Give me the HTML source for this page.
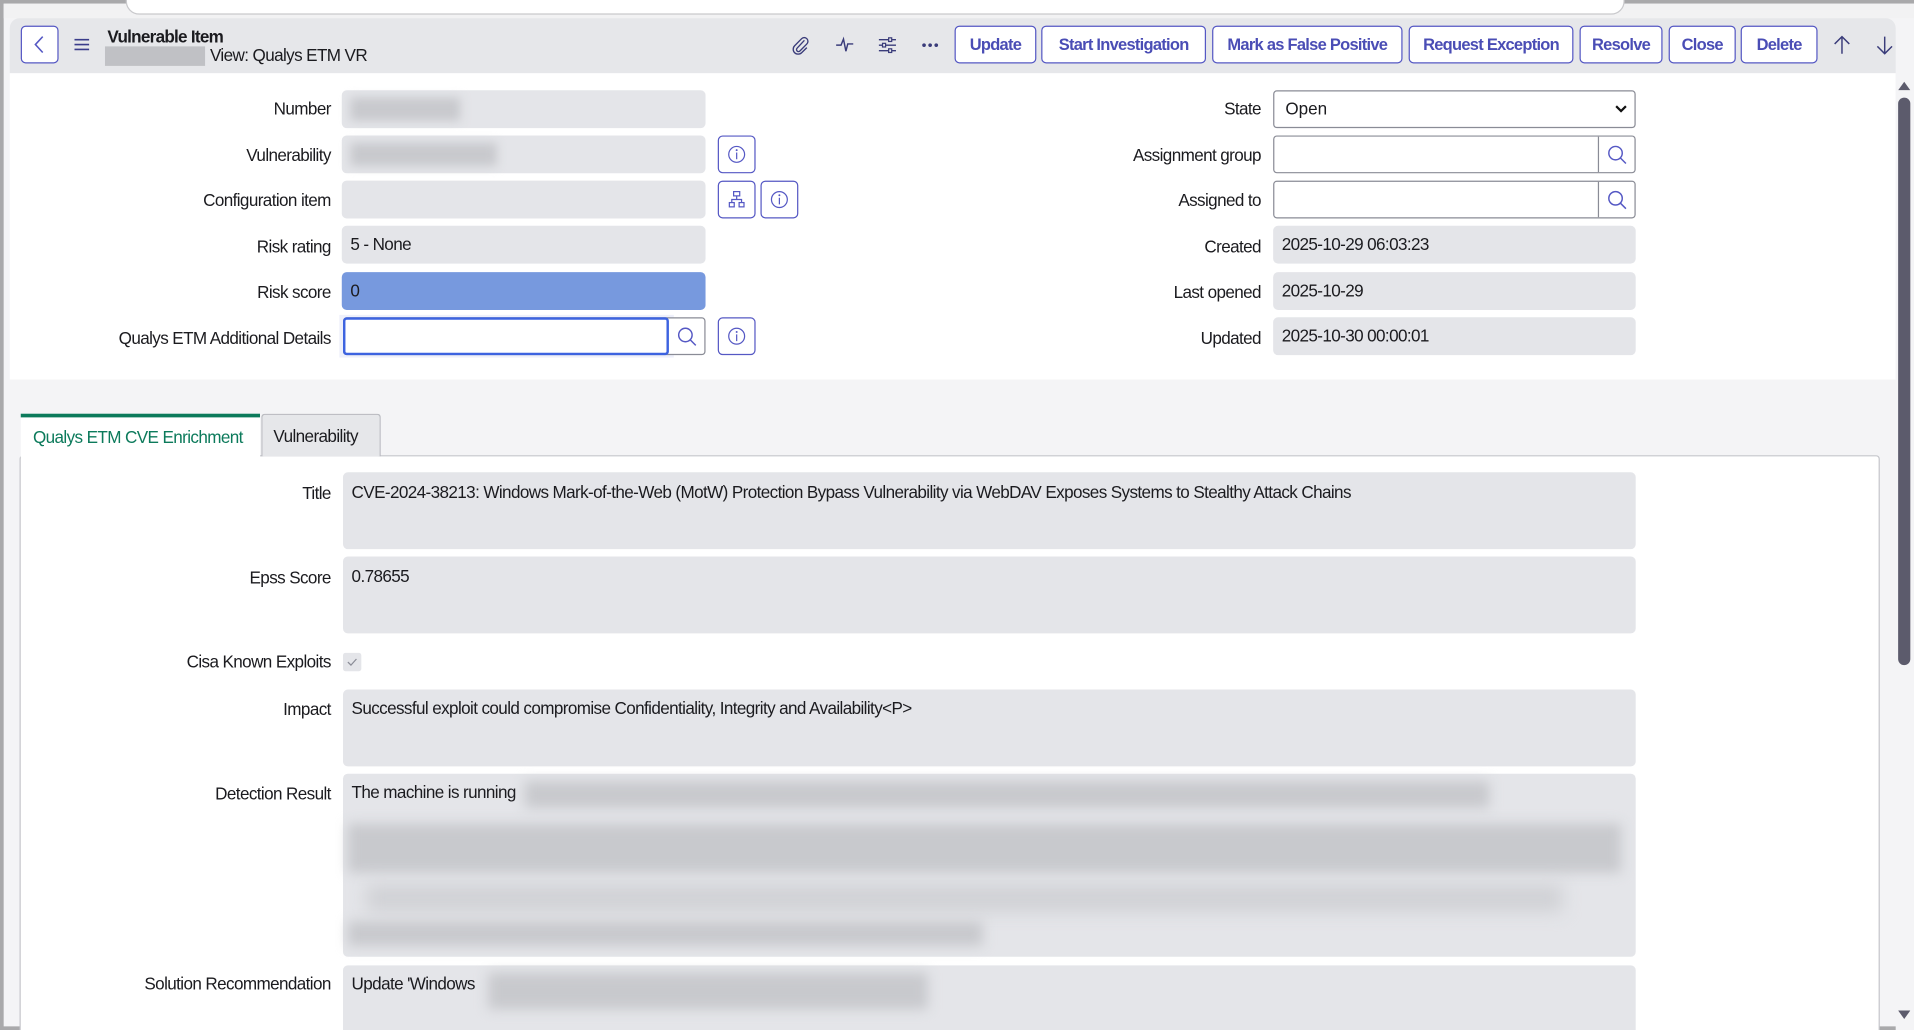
<!DOCTYPE html>
<html><head><meta charset="utf-8">
<style>
html,body{margin:0;padding:0;width:1914px;height:1030px;overflow:hidden;background:#f2f2f3}
#w{position:absolute;left:0;top:0;width:1568px;height:844px;transform:scale(1.22066,1.2204);transform-origin:0 0;font-family:"Liberation Sans",sans-serif;font-size:14px;color:#1b1b1f;overflow:hidden;background:#f4f4f6}
.a{position:absolute}
.lbl{position:absolute;text-align:right;white-space:nowrap;letter-spacing:-0.5px}
.ro{position:absolute;background:#e4e5e9;border-radius:4px;box-sizing:border-box;padding:0 7px;line-height:31px;white-space:nowrap;letter-spacing:-0.5px}
.inp{position:absolute;background:#fff;border:1px solid #8a8c96;border-radius:3px;box-sizing:border-box}
.ib{position:absolute;width:31px;height:31px;box-sizing:border-box;border:1px solid #5558c4;border-radius:4px;background:#fff}
.btn{position:absolute;top:21px;height:31px;box-sizing:border-box;border:1px solid #5558c4;border-radius:4px;background:#fff;color:#4a4db5;font-weight:bold;text-align:center;line-height:29px;font-size:13.5px;letter-spacing:-0.6px;white-space:nowrap}
.blur{position:absolute;background:#c8c9cd;filter:blur(4px)}
</style></head><body>
<div id="w">
<div class="a" style="left:0;top:0;width:1568px;height:3px;background:#a9a9ab"></div>
<div class="a" style="left:0;top:0;width:3px;height:844px;background:#a9a9ab"></div>
<div class="a" style="left:0;top:841px;width:1568px;height:3px;background:#a9a9ab"></div>
<div class="a" style="left:3px;top:3px;width:1565px;height:12px;background:#f2f2f3"></div>
<div class="a" style="left:103px;top:-10px;width:1226px;height:20px;background:#fff;border:1px solid #c9c9cc;border-radius:12px"></div>
<div class="a" style="left:8px;top:15px;width:1545px;height:45px;background:#e6e7ea;border-radius:8px 8px 0 0"></div>
<div class="a" style="left:17px;top:21px;width:31px;height:31px;box-sizing:border-box;border:1px solid #5558c4;border-radius:4px;background:#fff"><svg width="29" height="29" viewBox="0 0 29 29"><path d="M17 8 L11 14.5 L17 21" fill="none" stroke="#5558c4" stroke-width="1.3"/></svg></div>
<svg class="a" style="left:61px;top:31px" width="13" height="11"><path d="M0 1.5H12M0 5.5H12M0 9.5H12" stroke="#3a3c8a" stroke-width="1.3"/></svg>
<div class="a" style="left:88px;top:22px;font-weight:bold;font-size:14px;letter-spacing:-0.6px">Vulnerable Item</div>
<div class="a" style="left:86px;top:38px;width:82px;height:16px;background:#c0c1c5"></div>
<div class="a" style="left:172px;top:37px;font-size:14px;letter-spacing:-0.5px">View: Qualys ETM VR</div>
<svg class="a" style="left:648px;top:29px" width="16" height="16" viewBox="0 0 16 16"><path d="M11 4 L5 10.5 a1.6 1.6 0 0 0 2.3 2.3 L13 7 a3 3 0 0 0 -4.3 -4.3 L3 8.5 a4 4 0 0 0 5.7 5.7 L13 10" fill="none" stroke="#3a3c7a" stroke-width="1.1"/></svg>
<svg class="a" style="left:684px;top:29px" width="16" height="16" viewBox="0 0 16 16"><path d="M1 8 H5 L7 3 L9 13 L10.5 7 H15" fill="none" stroke="#3a3c7a" stroke-width="1.2"/></svg>
<svg class="a" style="left:719px;top:29px" width="16" height="16" viewBox="0 0 16 16"><path d="M1 3.5H15M1 8H15M1 12.5H15" stroke="#3a3c7a" stroke-width="1.1"/><rect x="9" y="2" width="2.5" height="3" fill="#e6e7ea" stroke="#3a3c7a"/><rect x="4" y="6.5" width="2.5" height="3" fill="#e6e7ea" stroke="#3a3c7a"/><rect x="9" y="11" width="2.5" height="3" fill="#e6e7ea" stroke="#3a3c7a"/></svg>
<svg class="a" style="left:755px;top:35px" width="14" height="4"><circle cx="2" cy="2" r="1.5" fill="#3a3c7a"/><circle cx="7" cy="2" r="1.5" fill="#3a3c7a"/><circle cx="12" cy="2" r="1.5" fill="#3a3c7a"/></svg>
<div class="btn" style="left:782px;width:67px">Update</div>
<div class="btn" style="left:853px;width:135px">Start Investigation</div>
<div class="btn" style="left:993px;width:156px">Mark as False Positive</div>
<div class="btn" style="left:1154px;width:135px">Request Exception</div>
<div class="btn" style="left:1294px;width:68px">Resolve</div>
<div class="btn" style="left:1367px;width:55px">Close</div>
<div class="btn" style="left:1426px;width:63px">Delete</div>
<svg class="a" style="left:1502px;top:29px" width="14" height="16"><path d="M7 15V1M1 7L7 1L13 7" fill="none" stroke="#3a3c7a" stroke-width="1.2"/></svg>
<svg class="a" style="left:1537px;top:29px" width="14" height="16"><path d="M7 1V15M1 9L7 15L13 9" fill="none" stroke="#3a3c7a" stroke-width="1.2"/></svg>
<div class="a" style="left:8px;top:60px;width:1545px;height:251px;background:#fff"></div>
<div class="lbl" style="right:1297px;top:81px">Number</div>
<div class="ro" style="left:280px;top:74px;width:298px;height:31px"></div>
<div class="blur" style="left:287px;top:80px;width:90px;height:19px"></div>
<div class="lbl" style="right:1297px;top:119px">Vulnerability</div>
<div class="ro" style="left:280px;top:111px;width:298px;height:31px"></div>
<div class="blur" style="left:287px;top:117px;width:120px;height:19px"></div>
<div class="ib" style="left:588px;top:111px"><svg width="29" height="29"><circle cx="14.5" cy="14.5" r="6.5" fill="none" stroke="#5558c4"/><path d="M14.5 13V18.5" stroke="#5558c4"/><circle cx="14.5" cy="11" r="0.8" fill="#5558c4"/></svg></div>
<div class="lbl" style="right:1297px;top:156px">Configuration item</div>
<div class="ro" style="left:280px;top:148px;width:298px;height:31px"></div>
<div class="ib" style="left:588px;top:148px"><svg width="29" height="29"><rect x="12" y="8" width="5" height="3.5" fill="none" stroke="#5558c4"/><path d="M14.5 11.5V14.5M10.5 17V14.5H18.5V17" fill="none" stroke="#5558c4"/><rect x="8.5" y="17" width="4" height="3.5" fill="none" stroke="#5558c4"/><rect x="16.5" y="17" width="4" height="3.5" fill="none" stroke="#5558c4"/></svg></div>
<div class="ib" style="left:623px;top:148px"><svg width="29" height="29"><circle cx="14.5" cy="14.5" r="6.5" fill="none" stroke="#5558c4"/><path d="M14.5 13V18.5" stroke="#5558c4"/><circle cx="14.5" cy="11" r="0.8" fill="#5558c4"/></svg></div>
<div class="lbl" style="right:1297px;top:194px">Risk rating</div>
<div class="ro" style="left:280px;top:185px;width:298px;height:31px">5 - None</div>
<div class="lbl" style="right:1297px;top:231px">Risk score</div>
<div class="ro" style="left:280px;top:223px;width:298px;height:31px;background:#7799de">0</div>
<div class="lbl" style="right:1297px;top:269px">Qualys ETM Additional Details</div>
<div class="a" style="left:278px;top:258px;width:274px;height:35px;background:#eef0fb"></div>
<div class="inp" style="left:281px;top:260px;width:297px;height:31px"></div>
<div class="a" style="left:281px;top:260px;width:267px;height:31px;border:2px solid #3d63e0;border-radius:3px;box-sizing:border-box;background:#fff"></div>
<svg class="a" style="left:554px;top:267px" width="18" height="18"><circle cx="7.5" cy="7.5" r="5.5" fill="none" stroke="#5558c4" stroke-width="1.2"/><path d="M11.5 11.5L16 16" stroke="#5558c4" stroke-width="1.2"/></svg>
<div class="ib" style="left:588px;top:260px"><svg width="29" height="29"><circle cx="14.5" cy="14.5" r="6.5" fill="none" stroke="#5558c4"/><path d="M14.5 13V18.5" stroke="#5558c4"/><circle cx="14.5" cy="11" r="0.8" fill="#5558c4"/></svg></div>
<div class="lbl" style="right:535px;top:81px">State</div>
<div class="inp" style="left:1043px;top:74px;width:297px;height:31px;padding:0 9px;line-height:29px">Open<svg style="position:absolute;right:6px;top:11px" width="10" height="7"><path d="M1 1L5 5L9 1" fill="none" stroke="#111" stroke-width="1.8"/></svg></div>
<div class="lbl" style="right:535px;top:119px">Assignment group</div>
<div class="inp" style="left:1043px;top:111px;width:297px;height:31px"><div class="a" style="left:265px;top:0;width:1px;height:29px;background:#8a8c96"></div><svg class="a" style="left:272px;top:6px" width="18" height="18"><circle cx="7.5" cy="7.5" r="5.5" fill="none" stroke="#5558c4" stroke-width="1.2"/><path d="M11.5 11.5L16 16" stroke="#5558c4" stroke-width="1.2"/></svg></div>
<div class="lbl" style="right:535px;top:156px">Assigned to</div>
<div class="inp" style="left:1043px;top:148px;width:297px;height:31px"><div class="a" style="left:265px;top:0;width:1px;height:29px;background:#8a8c96"></div><svg class="a" style="left:272px;top:6px" width="18" height="18"><circle cx="7.5" cy="7.5" r="5.5" fill="none" stroke="#5558c4" stroke-width="1.2"/><path d="M11.5 11.5L16 16" stroke="#5558c4" stroke-width="1.2"/></svg></div>
<div class="lbl" style="right:535px;top:194px">Created</div>
<div class="ro" style="left:1043px;top:185px;width:297px;height:31px">2025-10-29 06:03:23</div>
<div class="lbl" style="right:535px;top:231px">Last opened</div>
<div class="ro" style="left:1043px;top:223px;width:297px;height:31px">2025-10-29</div>
<div class="lbl" style="right:535px;top:269px">Updated</div>
<div class="ro" style="left:1043px;top:260px;width:297px;height:31px">2025-10-30 00:00:01</div>
<div class="a" style="left:16px;top:373px;width:1524px;height:480px;background:#fff;border:1px solid #c5c6cb;border-radius:3px;box-sizing:border-box"></div>
<div class="a" style="left:17px;top:339px;width:196px;height:36px;background:#fff;border-top:3px solid #0c7a5b;box-sizing:border-box;color:#0c7a5b;line-height:32px;padding-left:10px;letter-spacing:-0.5px">Qualys ETM CVE Enrichment</div>
<div class="a" style="left:214px;top:339px;width:98px;height:35px;background:#e6e7ea;border:1px solid #b8b9bf;border-bottom:none;border-radius:3px 3px 0 0;box-sizing:border-box;line-height:34px;padding-left:9px;letter-spacing:-0.5px">Vulnerability</div>
<div class="lbl" style="right:1297px;top:396px">Title</div>
<div class="ro" style="left:281px;top:387px;width:1059px;height:63px;line-height:normal;padding-top:8px">CVE-2024-38213: Windows Mark-of-the-Web (MotW) Protection Bypass Vulnerability via WebDAV Exposes Systems to Stealthy Attack Chains</div>
<div class="lbl" style="right:1297px;top:465px">Epss Score</div>
<div class="ro" style="left:281px;top:456px;width:1059px;height:63px;line-height:normal;padding-top:8px">0.78655</div>
<div class="lbl" style="right:1297px;top:534px">Cisa Known Exploits</div>
<div class="a" style="left:281px;top:535px;width:15px;height:15px;background:#e4e5e9;border-radius:2px"><svg width="15" height="15"><path d="M4 7.5L6.5 10L11 5" fill="none" stroke="#8a8c96" stroke-width="1"/></svg></div>
<div class="lbl" style="right:1297px;top:573px">Impact</div>
<div class="ro" style="left:281px;top:565px;width:1059px;height:63px;line-height:normal;padding-top:7px">Successful exploit could compromise Confidentiality, Integrity and Availability&lt;P&gt;</div>
<div class="lbl" style="right:1297px;top:642px">Detection Result</div>
<div class="ro" style="left:281px;top:634px;width:1059px;height:150px;line-height:normal;padding-top:7px">The machine is running</div>
<div class="blur" style="left:430px;top:640px;width:790px;height:22px;filter:blur(5px)"></div>
<div class="blur" style="left:285px;top:675px;width:1043px;height:40px;filter:blur(5px)"></div>
<div class="blur" style="left:300px;top:725px;width:980px;height:22px;filter:blur(7px);background:#d0d1d5"></div>
<div class="blur" style="left:285px;top:755px;width:520px;height:20px;filter:blur(5px)"></div>
<div class="lbl" style="right:1297px;top:798px">Solution Recommendation</div>
<div class="ro" style="left:281px;top:791px;width:1059px;height:70px;line-height:normal;padding-top:7px">Update 'Windows</div>
<div class="blur" style="left:400px;top:797px;width:360px;height:30px;filter:blur(5px)"></div>
<div class="a" style="left:1553px;top:60px;width:15px;height:784px;background:#f4f4f6"></div>
<svg class="a" style="left:1555px;top:66px" width="10" height="8"><path d="M0 8L5 1L10 8Z" fill="#5c5b6c"/></svg>
<div class="a" style="left:1555px;top:80px;width:10px;height:465px;background:#5c5b6c;border-radius:5px"></div>
<svg class="a" style="left:1555px;top:828px" width="10" height="8"><path d="M0 0L5 7L10 0Z" fill="#5c5b6c"/></svg>
</div>
</body></html>
